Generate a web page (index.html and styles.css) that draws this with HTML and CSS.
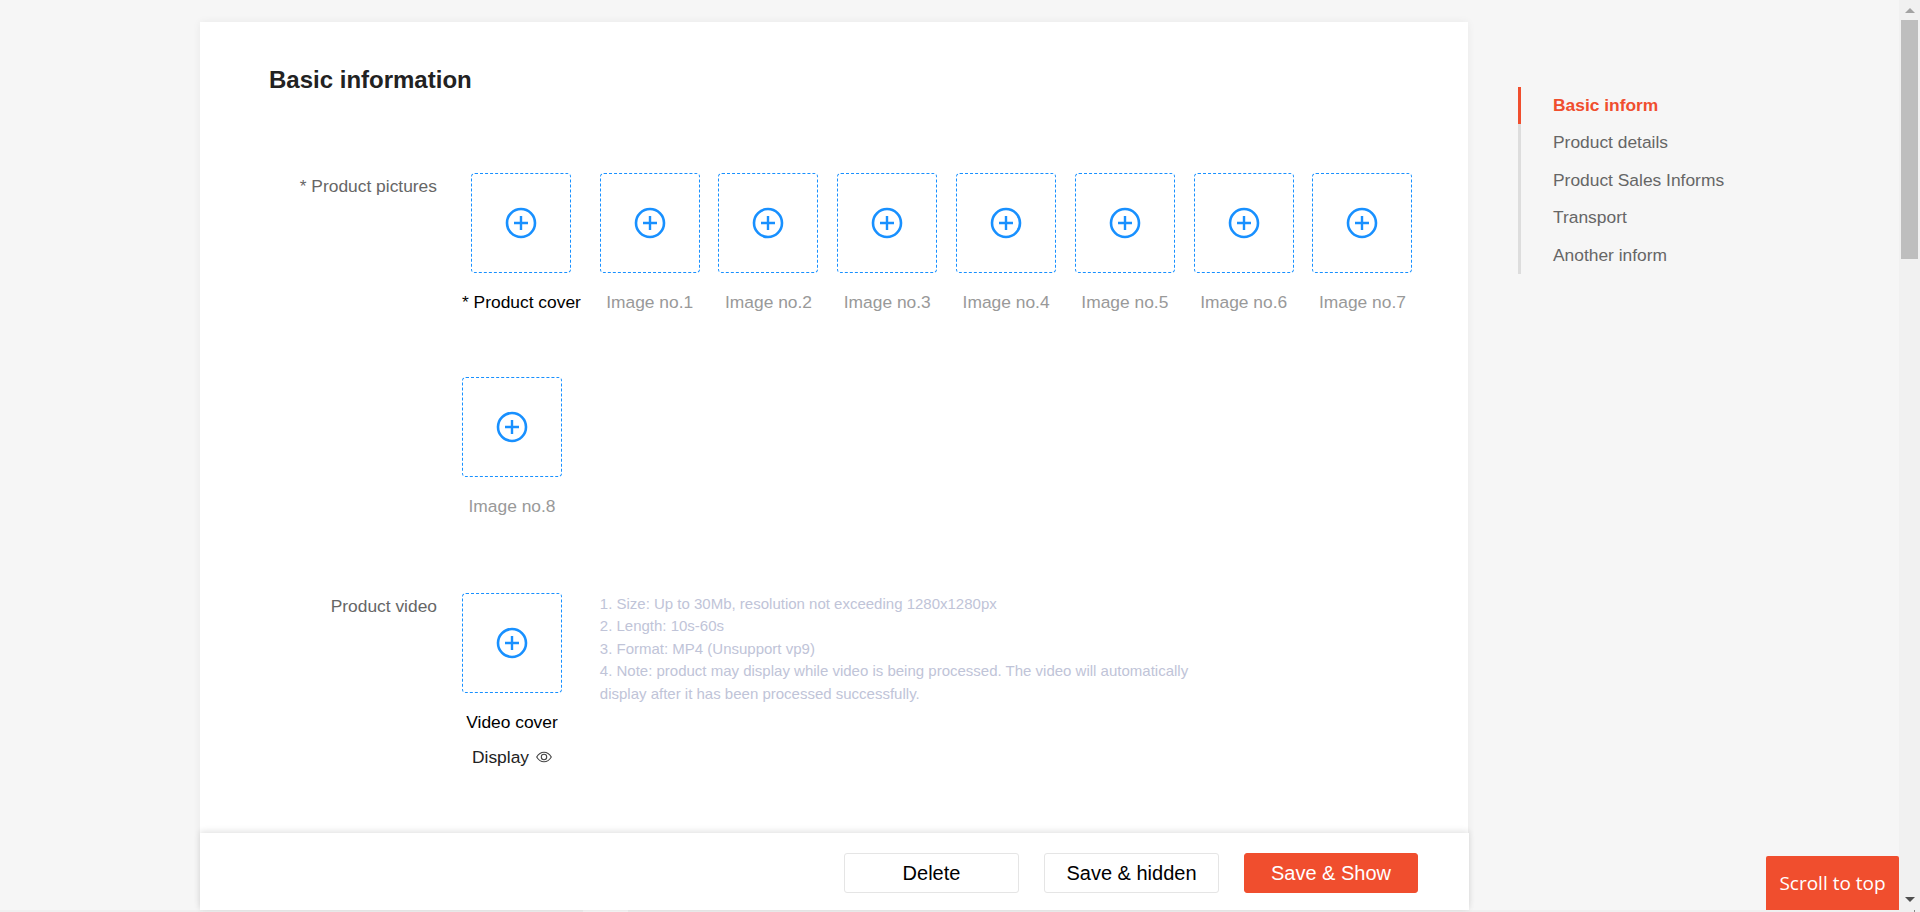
FILE: index.html
```html
<!DOCTYPE html>
<html>

<head>
    <title>Product - Basic information</title>
    <link rel="stylesheet" href="styles.css">
</head>

<body>
    <!-- Plus icon is reused by every upload box -->
    <svg class="icon-defs" width="0" height="0">
        <symbol id="icon-plus" viewBox="0 0 32 32">
            <circle cx="16" cy="16" r="14" fill="none" stroke="currentColor" stroke-width="2.6" />
            <path d="M9 16H23M16 9V23" fill="none" stroke="currentColor" stroke-width="2.4" />
        </symbol>
    </svg>

    <div class="window">
        <div class="page">
            <main class="card">
                <div class="card-body">
                    <h1 class="card-title">Basic information</h1>

                    <!-- Product pictures -->
                    <div class="form-row">
                        <div class="form-label">* Product pictures</div>
                        <div class="upload-list">
                            <div class="upload-item">
                                <div class="upload-box"><svg class="plus"><use href="#icon-plus" /></svg></div>
                                <div class="upload-name upload-name-main">* Product cover</div>
                            </div>
                            <div class="upload-item">
                                <div class="upload-box"><svg class="plus"><use href="#icon-plus" /></svg></div>
                                <div class="upload-name">Image no.1</div>
                            </div>
                            <div class="upload-item">
                                <div class="upload-box"><svg class="plus"><use href="#icon-plus" /></svg></div>
                                <div class="upload-name">Image no.2</div>
                            </div>
                            <div class="upload-item">
                                <div class="upload-box"><svg class="plus"><use href="#icon-plus" /></svg></div>
                                <div class="upload-name">Image no.3</div>
                            </div>
                            <div class="upload-item">
                                <div class="upload-box"><svg class="plus"><use href="#icon-plus" /></svg></div>
                                <div class="upload-name">Image no.4</div>
                            </div>
                            <div class="upload-item">
                                <div class="upload-box"><svg class="plus"><use href="#icon-plus" /></svg></div>
                                <div class="upload-name">Image no.5</div>
                            </div>
                            <div class="upload-item">
                                <div class="upload-box"><svg class="plus"><use href="#icon-plus" /></svg></div>
                                <div class="upload-name">Image no.6</div>
                            </div>
                            <div class="upload-item">
                                <div class="upload-box"><svg class="plus"><use href="#icon-plus" /></svg></div>
                                <div class="upload-name">Image no.7</div>
                            </div>
                            <div class="upload-item">
                                <div class="upload-box"><svg class="plus"><use href="#icon-plus" /></svg></div>
                                <div class="upload-name">Image no.8</div>
                            </div>
                        </div>
                    </div>

                    <!-- Product video -->
                    <div class="form-row form-row-video">
                        <div class="form-label">Product video</div>
                        <div class="upload-item">
                            <div class="upload-box"><svg class="plus"><use href="#icon-plus" /></svg></div>
                            <div class="upload-name upload-name-main">Video cover</div>
                            <div class="upload-display">
                                Display
                                <svg class="eye" viewBox="0 0 16 12">
                                    <path d="M0.7 6C2.6 2.8 5 1.2 8 1.2S13.4 2.8 15.3 6C13.4 9.2 11 10.8 8 10.8S2.6 9.2 0.7 6Z" />
                                    <circle cx="8" cy="6" r="2.7" />
                                </svg>
                            </div>
                        </div>
                        <ol class="video-hint">
                            <li>1. Size: Up to 30Mb, resolution not exceeding 1280x1280px</li>
                            <li>2. Length: 10s-60s</li>
                            <li>3. Format: MP4 (Unsupport vp9)</li>
                            <li>4. Note: product may display while video is being processed. The video will automatically display after it has been processed successfully.</li>
                        </ol>
                    </div>
                </div>

                <!-- Save buttons stay at the bottom of the card -->
                <footer class="card-footer">
                    <button class="btn">Delete</button>
                    <button class="btn">Save &amp; hidden</button>
                    <button class="btn btn-primary">Save &amp; Show</button>
                </footer>
            </main>

            <nav class="side-nav">
                <a class="side-link side-link-active">Basic inform</a>
                <a class="side-link">Product details</a>
                <a class="side-link">Product Sales Informs</a>
                <a class="side-link">Transport</a>
                <a class="side-link">Another inform</a>
            </nav>

            <button class="scroll-top">Scroll to top</button>
        </div>

        <!-- Page scrollbar -->
        <div class="scrollbar">
            <div class="scroll-arrow scroll-arrow-up"></div>
            <div class="scroll-thumb"></div>
            <div class="scroll-arrow scroll-arrow-down"></div>
        </div>
    </div>

    <!-- Top edge of the horizontal scrollbar, the rest is cut off -->
    <div class="hscroll">
        <div class="hscroll-thumb"></div>
        <div class="hscroll-mark"></div>
    </div>
</body>

</html>
```

FILE: styles.css
```css
* {
    box-sizing: border-box;
}

html,
body {
    height: 100%;
}

body {
    margin: 0;
    display: flex;
    flex-direction: column;
    overflow: hidden;
    font-family: "Liberation Sans", Arial, sans-serif;
    font-size: 17.4px;
    background: #f6f6f6;
}

.icon-defs {
    position: absolute;
}

.window {
    display: flex;
    height: 910px;
}

.page {
    flex: 1;
    position: relative;
    display: flex;
    align-items: flex-start;
    padding: 22px 0 0 200px;
}

/* Main white card */
.card {
    width: 1268px;
    height: 888px;
    display: flex;
    flex-direction: column;
    background: #fff;
    box-shadow: 0 0 8px rgba(0, 0, 0, 0.06);
}

.card-body {
    flex: 1;
    padding: 43px 0 0 69px;
    overflow: hidden;
}

.card-title {
    margin: 0 0 78px;
    font-size: 24px;
    line-height: 30px;
    font-weight: bold;
    color: #222;
}

.form-row {
    display: flex;
    align-items: flex-start;
}

.form-row-video {
    margin-top: 12px;
}

.form-label {
    width: 168px;
    margin-right: 25px;
    flex-shrink: 0;
    text-align: right;
    line-height: 26px;
    color: #666;
}

.upload-list {
    display: flex;
    flex-wrap: wrap;
    flex: 1;
}

.upload-item {
    display: flex;
    flex-direction: column;
    align-items: center;
    margin: 0 18.8px 62px 0;
    white-space: nowrap;
}

.upload-box {
    width: 100px;
    height: 100px;
    display: flex;
    align-items: center;
    justify-content: center;
    border: 1px dashed #1890ff;
    border-radius: 4px;
    color: #1890ff;
}

.plus {
    width: 32px;
    height: 32px;
}

.upload-name {
    margin-top: 16px;
    line-height: 26px;
    color: #999;
}

.upload-name-main {
    color: #000;
}

.upload-display {
    display: flex;
    align-items: center;
    gap: 7px;
    margin-top: 9px;
    line-height: 26px;
    color: #222;
}

.eye {
    width: 16px;
    height: 12px;
    fill: none;
    stroke: #444;
    stroke-width: 1.1;
}

.video-hint {
    width: 600px;
    margin: 0 0 0 19px;
    padding: 0;
    list-style: none;
    font-size: 15px;
    line-height: 22.4px;
    color: #c0c4d8;
}

/* Bottom button bar */
.card-footer {
    flex-shrink: 0;
    height: 77px;
    width: 1269px;
    display: flex;
    align-items: center;
    justify-content: flex-end;
    gap: 25px;
    padding: 3px 51px 0 0;
    background: #fff;
    box-shadow: 0 -2px 6px rgba(0, 0, 0, 0.11);
    position: relative;
}

.btn {
    width: 175px;
    height: 40px;
    border: 1px solid #e5e5e5;
    border-radius: 3px;
    background: #fff;
    color: #000;
    font-family: inherit;
    font-size: 20px;
    cursor: pointer;
}

.btn-primary {
    width: 174px;
    border-color: #f04e2e;
    background: #f04e2e;
    color: #fff;
}

/* Section links on the right */
.side-nav {
    display: flex;
    flex-direction: column;
    width: 300px;
    margin: 65px 0 0 50px;
    border-left: 3px solid #ddd;
}

.side-link {
    height: 37.4px;
    margin-left: -3px;
    padding-left: 32px;
    border-left: 3px solid transparent;
    line-height: 36.5px;
    color: #666;
}

.side-link-active {
    border-left-color: #f04e2e;
    color: #f04e2e;
    font-weight: bold;
}

.scroll-top {
    position: absolute;
    right: 0;
    bottom: 0;
    width: 133px;
    height: 54px;
    border: 0;
    border-radius: 2px 2px 0 0;
    background: #f04e2e;
    color: #fff;
    font-family: "Open Sans", sans-serif;
    font-size: 19px;
    cursor: pointer;
}

/* Scrollbar drawn by hand */
.scrollbar {
    width: 21px;
    flex-shrink: 0;
    display: flex;
    flex-direction: column;
    align-items: center;
    background: #f1f1f1;
}

.scroll-thumb {
    width: 17px;
    height: 239px;
    margin-top: 7px;
    background: #bebebe;
}

.scroll-arrow {
    width: 0;
    height: 0;
    border-left: 5px solid transparent;
    border-right: 5px solid transparent;
}

.scroll-arrow-up {
    margin-top: 8px;
    border-bottom: 5px solid #a3a3a3;
}

.scroll-arrow-down {
    margin-top: auto;
    margin-bottom: 8px;
    border-top: 5px solid #505050;
}

.hscroll {
    display: flex;
    height: 2px;
    background: #f0f0f0;
}

.hscroll-thumb {
    width: 45px;
    margin-left: 583px;
    background: #f9f9f9;
}

.hscroll-mark {
    width: 1px;
    margin-left: auto;
    margin-right: 5px;
    background: #888;
}
```
